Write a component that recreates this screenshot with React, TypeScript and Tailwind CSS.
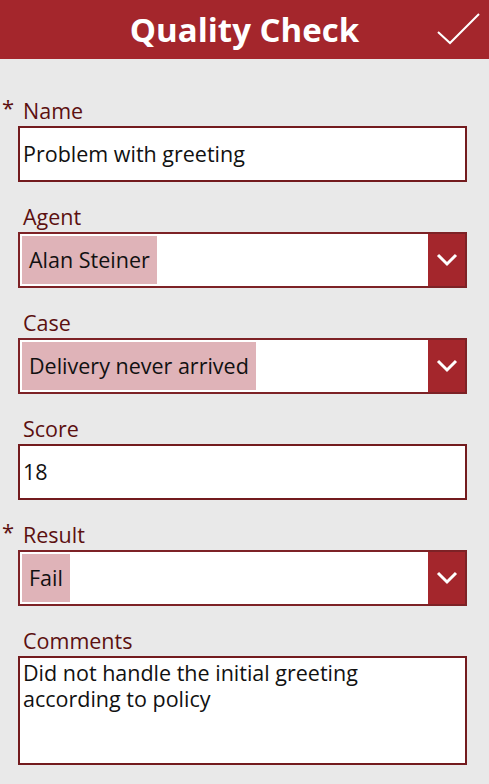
import React from "react";

const Chevron: React.FC = () => (
  <svg width="22" height="14" viewBox="0 0 22 14" fill="none">
    <path d="M2 2l9 9 9-9" stroke="white" strokeWidth="3" />
  </svg>
);

type FieldProps = { label: string; required?: boolean; children: React.ReactNode };

const Field: React.FC<FieldProps> = ({ label, required, children }) => (
  <div className="flex flex-col">
    <div className="relative h-[30px] pl-[23px] text-[21.5px] leading-[30px] text-[#5c1010]">
      {required && <span className="absolute left-[2px] top-[-4px] text-[22px]">*</span>}
      {label}
    </div>
    <div className="ml-[18px] w-[449px]">{children}</div>
  </div>
);

const TextBox: React.FC<{ value: string }> = ({ value }) => (
  <div className="h-[56px] border-2 border-[#731b1e] bg-white pl-[3px] flex items-center text-[21.5px] text-[#111]">
    {value}
  </div>
);

const Combo: React.FC<{ value: string }> = ({ value }) => (
  <div className="h-[56px] border-2 border-[#7d2226] bg-white flex items-stretch">
    <div className="flex-1 flex items-stretch p-[2px]">
      <div className="bg-[#dfb3b8] px-[7px] flex items-center text-[21.5px] text-[#111]">{value}</div>
    </div>
    <div className="w-[37px] bg-[#a4262c] flex items-center justify-center">
      <Chevron />
    </div>
  </div>
);

export default function App() {
  return (
    <div className="w-[489px] h-[784px] bg-[#e9e9e9] font-['Open_Sans',sans-serif] overflow-hidden">
      <header className="relative h-[59px] bg-[#a4262c] flex items-center justify-center">
        <h1 className="text-[33px] font-bold text-white">Quality Check</h1>
        <svg className="absolute right-0 top-0" width="60" height="59" viewBox="0 0 60 59" fill="none">
          <path d="M9 32l12 11 29-29" stroke="white" strokeWidth="2" />
        </svg>
      </header>
      <main className="flex flex-col gap-[20px] pt-[37px]">
        <Field label="Name" required>
          <TextBox value="Problem with greeting" />
        </Field>
        <Field label="Agent">
          <Combo value="Alan Steiner" />
        </Field>
        <Field label="Case">
          <Combo value="Delivery never arrived" />
        </Field>
        <Field label="Score">
          <TextBox value="18" />
        </Field>
        <Field label="Result" required>
          <Combo value="Fail" />
        </Field>
        <Field label="Comments">
          <div className="h-[109px] border-2 border-[#731b1e] bg-white pl-[3px] pt-[2px] text-[21.5px] leading-[26px] text-[#111]">
            Did not handle the initial greeting
            <br />
            according to policy
          </div>
        </Field>
      </main>
    </div>
  );
}
